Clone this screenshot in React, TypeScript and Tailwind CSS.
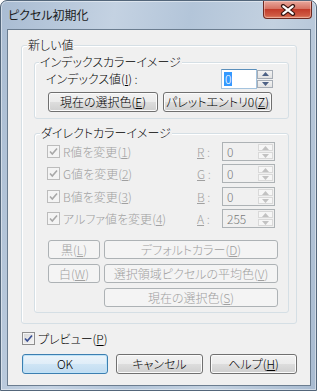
import React from "react";

function U({ children }: { children: React.ReactNode }) {
  return <span className="underline underline-offset-[1px] decoration-1">{children}</span>;
}

function Btn({
  children,
  kind,
  className,
}: {
  children: React.ReactNode;
  kind: "normal" | "disabled" | "default";
  className: string;
}) {
  const k =
    kind === "normal"
      ? "border-[#707070] bg-[linear-gradient(#f2f2f2,#ebebeb_50%,#dddddd_50%,#cfcfcf)] shadow-[inset_0_0_0_1px_#fbfbfb] text-black"
      : kind === "disabled"
      ? "border-[#adb2b5] bg-[#f4f4f4] text-[#a0a0a0]"
      : "border-[#3c7fb1] bg-[linear-gradient(#ecf4fa,#dfedf8_50%,#cfe5f5_50%,#c1dcf1)] shadow-[inset_0_0_0_1px_#bfe3f8] text-black";
  return (
    <div className={"flex items-center justify-center rounded-[3px] border " + k + " " + className}>
      <span>{children}</span>
    </div>
  );
}

function Check({ disabled }: { disabled: boolean }) {
  return disabled ? (
    <span className="flex w-[13px] h-[13px] shrink-0 items-center justify-center border border-[#bcbcbc] bg-[#f4f4f4]">
      <svg width="11" height="11" viewBox="0 0 11 11">
        <path d="M2 5.5 L4.3 8 L9 2.5" fill="none" stroke="#a8a8a8" strokeWidth="1.6" />
      </svg>
    </span>
  ) : (
    <span className="flex w-[13px] h-[13px] shrink-0 items-center justify-center border border-[#8f8f8f] bg-[linear-gradient(135deg,#d6d6d6,#f7f7f7)] shadow-[inset_0_0_0_1px_#f4f4f4]">
      <svg width="11" height="11" viewBox="0 0 11 11">
        <path d="M2 5.5 L4.3 8 L9 2.5" fill="none" stroke="#3d5294" strokeWidth="1.7" />
      </svg>
    </span>
  );
}

function Arrow({ up, color }: { up: boolean; color: string }) {
  return (
    <svg width="7" height="4" viewBox="0 0 7 4">
      {up ? <polygon points="0,4 3.5,0 7,4" fill={color} /> : <polygon points="0,0 3.5,4 7,0" fill={color} />}
    </svg>
  );
}

function DisabledSpin({ value }: { value: string }) {
  return (
    <div className="flex w-[53px] h-[19px] border border-[#adb2b5] bg-[#f0f0f0]">
      <div className="flex-1 pl-[4px] flex items-center text-[#7a7a7a]">{value}</div>
      <div className="w-[15px] flex flex-col my-[1px] mr-[1px] gap-[1px]">
        <div className="flex-1 flex items-center justify-center border border-[#d9d9d9] bg-[#f6f6f6]">
          <Arrow up color="#c2c2c2" />
        </div>
        <div className="flex-1 flex items-center justify-center border border-[#d9d9d9] bg-[#f6f6f6]">
          <Arrow up={false} color="#c2c2c2" />
        </div>
      </div>
    </div>
  );
}

function Row({ label, key1, text, value, className }: { label: React.ReactNode; key1: string; text: string; value: string; className: string }) {
  return (
    <div className={"flex items-center h-[19px] pl-[12px] pr-[13px] " + className}>
      <div className="flex-1 flex items-center text-[#a0a0a0]">
        <Check disabled />
        <span className="ml-[3px]">
          {label}
          {"("}
          <U>{key1}</U>
          {")"}
        </span>
      </div>
      <div className="w-[25px] text-[#a0a0a0]">
        <U>{text}</U>
        {" :"}
      </div>
      <DisabledSpin value={value} />
    </div>
  );
}

export default function App() {
  return (
    <div className="w-[317px] h-[391px] flex flex-col border border-[#53667a] rounded-t-[7px] bg-[linear-gradient(100deg,#a9bcd2,#c4d2e2_30%,#b3c5d9_50%,#c3d1e0_72%,#a8bbd1)] shadow-[inset_0_0_0_1px_rgba(255,255,255,0.45)] overflow-hidden font-['Noto_Sans_CJK_JP','Noto_Sans',sans-serif] font-light text-[12px] leading-[14px] [font-feature-settings:'palt'] text-black">
      <div className="h-[28px] flex justify-between items-start">
        <div className="pl-[7px] pt-[7px] text-[#1c1c1c] font-normal">ピクセル初期化</div>
        <div className="mr-[4px] w-[49px] h-[18px] flex items-center justify-center rounded-b-[4px] border border-t-0 border-[#6e2a22] bg-[linear-gradient(#e8a89d,#d67363_45%,#c23c2a_50%,#cf5a43_85%,#e08a6c)] shadow-[inset_0_0_0_1px_rgba(255,220,210,0.45)]">
          <svg width="16" height="12" viewBox="0 0 16 12">
            <path d="M3 2 L13 10 M13 2 L3 10" stroke="#3a1611" strokeWidth="4.2" strokeLinecap="round" />
            <path d="M3.3 2.3 L12.7 9.7 M12.7 2.3 L3.3 9.7" stroke="#ffffff" strokeWidth="2.2" strokeLinecap="round" />
          </svg>
        </div>
      </div>
      <div className="ml-[6px] w-[304px] h-[357px] border border-[#6b7d90] bg-[#f0f0f0] flex flex-col">
        <div className="ml-[13px] mt-[15px] w-[276px] border border-[#d5dfe5] rounded-[3px] shadow-[inset_1px_1px_0_#ffffff]">
          <div className="-mt-[8px] ml-[5px] w-fit px-[1px] bg-[#f0f0f0]">新しい値</div>
          <div className="pl-[12px] pb-[10px]">
            <div className="mt-[10px] w-[255px] border border-[#d5dfe5] rounded-[3px] shadow-[inset_1px_1px_0_#ffffff]">
              <div className="-mt-[8px] ml-[4px] w-fit px-[1px] bg-[#f0f0f0]">インデックスカラーイメージ</div>
              <div className="pb-[6px]">
                <div className="h-[20px] flex items-center justify-between pl-[11px] pr-[15px]">
                  <span>
                    インデックス値(<U>I</U>) :
                  </span>
                  <div className="flex h-[20px]">
                    <div className="w-[36px] h-[20px] border border-[#a4c3de] border-t-[#5b8fbb] bg-white flex items-center pl-[2px]">
                      <span className="bg-[#3399ff] text-white px-[1px] leading-[14px]">0</span>
                    </div>
                    <div className="w-[16px] flex flex-col gap-[1px] py-[1px]">
                      <div className="flex-1 flex items-center justify-center border border-[#a5acb5] bg-[linear-gradient(#f3f3f3,#e2e2e2)]">
                        <Arrow up color="#4d6185" />
                      </div>
                      <div className="flex-1 flex items-center justify-center border border-[#a5acb5] bg-[linear-gradient(#f3f3f3,#e2e2e2)]">
                        <Arrow up={false} color="#4d6185" />
                      </div>
                    </div>
                  </div>
                </div>
                <div className="mt-[3px] flex pl-[13px] gap-[5px]">
                  <Btn kind="normal" className="w-[110px] h-[20px]">
                    現在の選択色(<U>E</U>)
                  </Btn>
                  <Btn kind="normal" className="w-[109px] h-[20px]">
                    パレットエントリ0(<U>Z</U>)
                  </Btn>
                </div>
              </div>
            </div>

            <div className="mt-[14px] w-[255px] border border-[#d5dfe5] rounded-[3px] shadow-[inset_1px_1px_0_#ffffff]">
              <div className="-mt-[8px] ml-[5px] w-fit px-[1px] bg-[#f0f0f0]">ダイレクトカラーイメージ</div>
              <div className="pb-[5px]">
                <Row label="R値を変更" key1="1" text="R" value="0" className="mt-[2px]" />
                <Row label="G値を変更" key1="2" text="G" value="0" className="mt-[3px]" />
                <Row label="B値を変更" key1="3" text="B" value="0" className="mt-[4px]" />
                <Row label="アルファ値を変更" key1="4" text="A" value="255" className="mt-[3px]" />
                <div className="mt-[12px] flex pl-[13px] pr-[10px] gap-[4px]">
                  <Btn kind="disabled" className="w-[52px] h-[19px]">
                    黒(<U>L</U>)
                  </Btn>
                  <Btn kind="disabled" className="flex-1 h-[19px]">
                    デフォルトカラー(<U>D</U>)
                  </Btn>
                </div>
                <div className="mt-[5px] flex pl-[13px] pr-[10px] gap-[4px]">
                  <Btn kind="disabled" className="w-[52px] h-[19px]">
                    白(<U>W</U>)
                  </Btn>
                  <Btn kind="disabled" className="flex-1 h-[19px]">
                    選択領域ピクセルの平均色(<U>V</U>)
                  </Btn>
                </div>
                <div className="mt-[5px] flex pl-[69px] pr-[10px]">
                  <Btn kind="disabled" className="flex-1 h-[19px]">
                    現在の選択色(<U>S</U>)
                  </Btn>
                </div>
              </div>
            </div>
          </div>
        </div>

        <div className="mt-[8px] ml-[14px] h-[13px] flex items-center">
          <Check disabled={false} />
          <span className="ml-[3px]">
            プレビュー(<U>P</U>)
          </span>
        </div>

        <div className="mt-[9px] ml-[14px] flex">
          <Btn kind="default" className="w-[86px] h-[20px]">
            OK
          </Btn>
          <Btn kind="normal" className="ml-[8px] w-[87px] h-[20px]">
            キャンセル
          </Btn>
          <Btn kind="normal" className="ml-[7px] w-[87px] h-[20px]">
            ヘルプ(<U>H</U>)
          </Btn>
        </div>
      </div>
    </div>
  );
}
